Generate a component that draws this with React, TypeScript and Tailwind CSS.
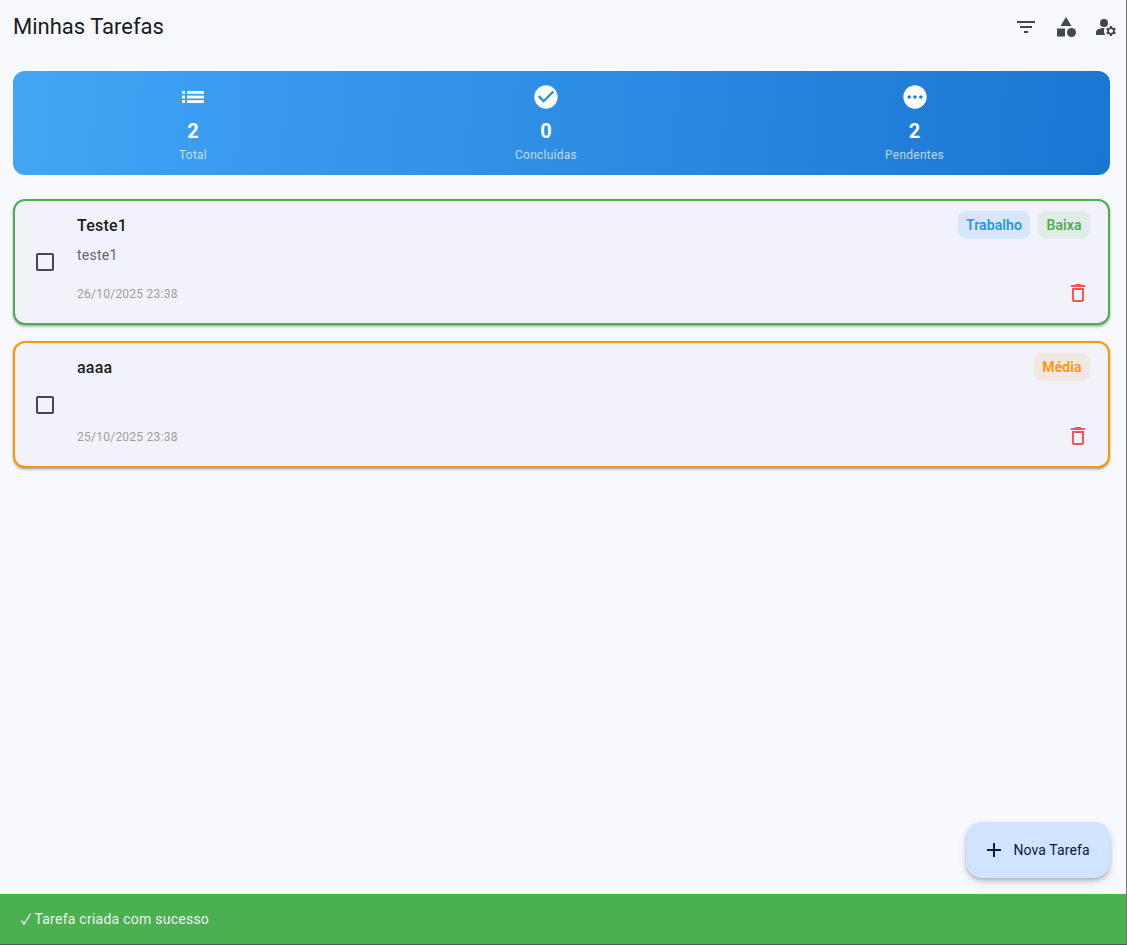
import type { ReactNode } from "react";
import {
  MdAdd,
  MdCategory,
  MdCheckCircle,
  MdDeleteOutline,
  MdFilterList,
  MdManageAccounts,
  MdPending,
} from "react-icons/md";

function ListIcon() {
  return (
    <svg width="28" height="28" viewBox="0 0 28 28" fill="currentColor">
      {[8, 12.6, 17.2].map((y) => (
        <g key={y}>
          <rect x="3" y={y} width="3" height="2.8" />
          <rect x="8" y={y} width="17" height="2.8" />
        </g>
      ))}
    </svg>
  );
}

function Stat({ icon, value, label }: { icon: ReactNode; value: number; label: string }) {
  return (
    <div className="flex flex-col items-center text-white">
      {icon}
      <span className="mt-1.5 text-[20px] leading-7 font-bold tracking-[0.25px]">{value}</span>
      <span className="mt-0.5 text-xs leading-4 tracking-[0.25px] text-white/70">{label}</span>
    </div>
  );
}

type Task = {
  title: string;
  description: string;
  date: string;
  card: string;
  footer: string;
  chips: { label: string; style: string }[];
};

const tasks: Task[] = [
  {
    title: "Teste1",
    description: "teste1",
    date: "26/10/2025 23:38",
    card: "h-[126px] border-[#4caf50]",
    footer: "mt-4",
    chips: [
      { label: "Trabalho", style: "w-[72px] bg-[#2196f3]/12 text-[#2196f3]" },
      { label: "Baixa", style: "w-[52px] bg-[#4caf50]/10 text-[#4caf50]" },
    ],
  },
  {
    title: "aaaa",
    description: "",
    date: "25/10/2025 23:38",
    card: "h-[127px] border-[#ff9800]",
    footer: "mt-[17px]",
    chips: [{ label: "Média", style: "w-[56px] bg-[#ff9800]/10 text-[#ff9800]" }],
  },
];

function TaskCard({ task }: { task: Task }) {
  return (
    <article
      className={`flex items-center rounded-xl border-2 bg-[#f2f2fa] pr-[18px] pl-[21px] shadow-[0_2px_3px_rgba(0,0,0,0.16),0_1px_2px_rgba(0,0,0,0.22)] ${task.card}`}
    >
      <button className="size-[18px] shrink-0 rounded-[2px] border-2 border-[#43474e]" aria-label={task.title} />
      <div className="ml-[23px] flex h-full grow flex-col pt-2.5">
        <div className="flex h-7 items-center justify-between">
          <h2 className="pt-0.5 text-base leading-6 font-medium tracking-[0.2px] text-[#191c20]">{task.title}</h2>
          <div className="flex gap-2">
            {task.chips.map((chip) => (
              <span
                key={chip.label}
                className={`flex h-7 items-center justify-center rounded-lg text-sm font-semibold tracking-[0.1px] whitespace-nowrap ${chip.style}`}
              >
                {chip.label}
              </span>
            ))}
          </div>
        </div>
        <p className="mt-1.5 h-5 text-sm leading-5 tracking-[0.25px] text-[#666666]">{task.description}</p>
        <div className={`flex h-6 items-center justify-between ${task.footer}`}>
          <time className="pt-0.5 text-xs leading-4 tracking-[0.25px] text-[#9e9e9e]">{task.date}</time>
          <button className="text-[#ff5252]" aria-label="Excluir">
            <MdDeleteOutline size={24} />
          </button>
        </div>
      </div>
    </article>
  );
}

export default function App() {
  return (
    <div className="flex h-[945px] w-[1127px] flex-col overflow-hidden border-r border-b border-r-[#77777b] border-b-[#555555] bg-[#f8f9ff] font-[Roboto,sans-serif]">
      <header className="flex h-[54px] items-center justify-between pl-[13px]">
        <h1 className="text-[22px] leading-7 text-[#191c20]">Minhas Tarefas</h1>
        <nav className="flex text-[#43474e]">
          <button className="flex size-10 items-center justify-center" aria-label="Filtrar">
            <MdFilterList size={24} />
          </button>
          <button className="flex size-10 items-center justify-center" aria-label="Categorias">
            <MdCategory size={24} />
          </button>
          <button className="flex size-10 items-center justify-center" aria-label="Conta">
            <MdManageAccounts size={24} />
          </button>
        </nav>
      </header>

      <section className="mt-[17px] mr-4 ml-[13px] flex h-[104px] items-start justify-around rounded-xl bg-[linear-gradient(95.4deg,#42a5f5,#1976d2)] p-3">
        <Stat icon={<ListIcon />} value={2} label="Total" />
        <Stat icon={<MdCheckCircle size={28} />} value={0} label="Concluídas" />
        <Stat icon={<MdPending size={28} />} value={2} label="Pendentes" />
      </section>

      <main className="mt-6 mr-4 ml-[13px] flex grow flex-col gap-4">
        {tasks.map((task) => (
          <TaskCard key={task.date} task={task} />
        ))}
      </main>

      <button className="mr-4 mb-4 flex h-14 w-[144.5px] shrink-0 items-center gap-2 self-end rounded-2xl bg-[#d1e4ff] pl-4 text-sm font-normal tracking-[0.1px] text-[#001d36] shadow-[0_3px_5px_-1px_rgba(0,0,0,0.2),0_4px_8px_rgba(0,0,0,0.12),0_1px_3px_rgba(0,0,0,0.06)]">
        <MdAdd size={24} />
        <span className="whitespace-nowrap">Nova Tarefa</span>
      </button>

      <footer className="flex h-[50px] shrink-0 items-center bg-[#4caf50] pl-5 text-sm tracking-[0.25px] text-[#f0f0f7]">
        <svg className="mr-[2.4px]" width="12" height="14" viewBox="0 0 12 14" fill="none" stroke="currentColor">
          <path d="M1.5 8.5 L4 12 L10.7 1.5" strokeWidth="1.3" />
        </svg>
        Tarefa criada com sucesso
      </footer>
    </div>
  );
}
